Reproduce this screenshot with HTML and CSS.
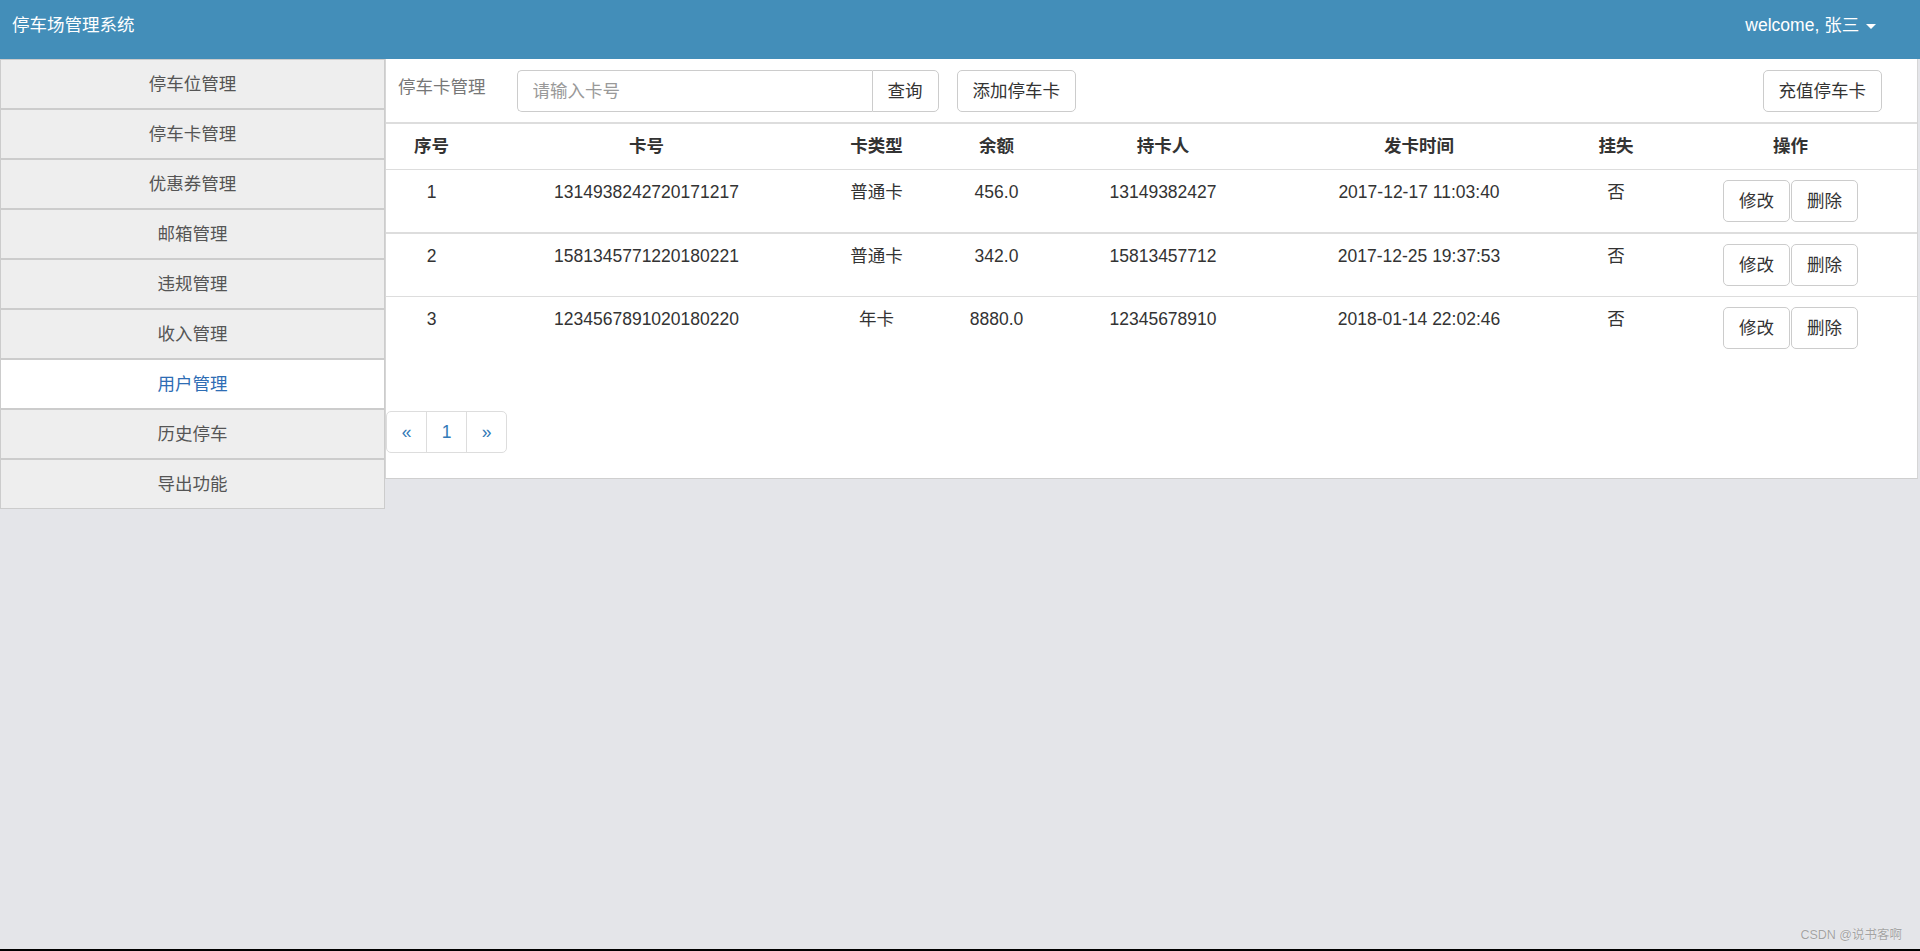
FILE: index.html
```html
<!DOCTYPE html>
<html lang="zh-CN">
<head>
<meta charset="utf-8">
<title>停车场管理系统</title>
<link rel="stylesheet" href="styles.css">
</head>
<body>
<header class="navbar">
  <div class="brand">停车场管理系统</div>
  <div class="user">welcome, 张三 <span class="caret"></span></div>
</header>
<div class="layout">
  <nav class="sidebar">
    <a class="side-item">停车位管理</a>
    <a class="side-item">停车卡管理</a>
    <a class="side-item">优惠券管理</a>
    <a class="side-item">邮箱管理</a>
    <a class="side-item">违规管理</a>
    <a class="side-item">收入管理</a>
    <a class="side-item active">用户管理</a>
    <a class="side-item">历史停车</a>
    <a class="side-item">导出功能</a>
  </nav>
  <main class="content">
    <section class="panel">
      <div class="toolbar">
        <span class="toolbar-title">停车卡管理</span>
        <div class="input-group">
          <input class="form-input" type="text" placeholder="请输入卡号">
          <button class="btn btn-attached">查询</button>
        </div>
        <button class="btn btn-add">添加停车卡</button>
        <button class="btn btn-right">充值停车卡</button>
      </div>
      <table class="data-table">
        <colgroup>
          <col class="c1"><col class="c2"><col class="c3"><col class="c4">
          <col class="c5"><col class="c6"><col class="c7"><col class="c8">
        </colgroup>
        <thead>
          <tr><th>序号</th><th>卡号</th><th>卡类型</th><th>余额</th><th>持卡人</th><th>发卡时间</th><th>挂失</th><th>操作</th></tr>
        </thead>
        <tbody>
          <tr class="row-first">
            <td>1</td><td>1314938242720171217</td><td>普通卡</td><td>456.0</td><td>13149382427</td><td>2017-12-17 11:03:40</td><td>否</td>
            <td><div class="ops"><button class="btn">修改</button><button class="btn">删除</button></div></td>
          </tr>
          <tr>
            <td>2</td><td>1581345771220180221</td><td>普通卡</td><td>342.0</td><td>15813457712</td><td>2017-12-25 19:37:53</td><td>否</td>
            <td><div class="ops"><button class="btn">修改</button><button class="btn">删除</button></div></td>
          </tr>
          <tr class="row-last">
            <td>3</td><td>1234567891020180220</td><td>年卡</td><td>8880.0</td><td>12345678910</td><td>2018-01-14 22:02:46</td><td>否</td>
            <td><div class="ops"><button class="btn">修改</button><button class="btn">删除</button></div></td>
          </tr>
        </tbody>
      </table>
      <ul class="pagination">
        <li><a>&laquo;</a></li>
        <li><a>1</a></li>
        <li><a>&raquo;</a></li>
      </ul>
    </section>
  </main>
  <div class="watermark">CSDN @说书客啊</div>
</div>
<div class="screen-edge"></div>
</body>
</html>
```
FILE: styles.css
```css
* { box-sizing: border-box; }

html, body {
  margin: 0;
  padding: 0;
  height: 100%;
}

body {
  display: flex;
  flex-direction: column;
  background: #e4e5e9;
  font-family: "Liberation Sans", "Noto Sans CJK SC", sans-serif;
  font-size: 17.5px;
  line-height: 25px;
  color: #333;
}

.navbar {
  flex: 0 0 59px;
  height: 59px;
  background: #438eb9;
  display: flex;
  justify-content: space-between;
  align-items: flex-start;
  padding: 13px 44px 0 12px;
  color: #fff;
}

.brand {
  font-size: 17.5px;
  line-height: 25px;
}

.user {
  font-size: 17.5px;
  line-height: 25px;
}

.caret {
  display: inline-block;
  width: 0;
  height: 0;
  margin-left: 2px;
  vertical-align: middle;
  border-top: 5px solid #fff;
  border-left: 5px solid transparent;
  border-right: 5px solid transparent;
}

.layout {
  flex: 1;
  display: flex;
  align-items: flex-start;
  position: relative;
}

.sidebar {
  flex: 0 0 385px;
  width: 385px;
  display: flex;
  flex-direction: column;
}

.side-item {
  display: block;
  height: 50px;
  line-height: 48px;
  text-align: center;
  background: #eeeeee;
  border: 1px solid #cccccc;
  color: #555;
  font-size: 17.5px;
}

.side-item.active {
  background: #fff;
  color: #2e6db4;
}

.content {
  flex: 0 0 1533px;
  width: 1533px;
}

.panel {
  background: #fff;
  border-left: 1px solid #d6d6d6;
  border-right: 1px solid #d6d6d6;
  border-bottom: 1px solid #cfcfcf;
}

.toolbar {
  display: flex;
  align-items: flex-start;
  padding: 11px 35px 10px 12px;
  border-bottom: 2px solid #dddddd;
}

.toolbar-title {
  color: #777;
  margin-top: 5px;
  line-height: 25px;
}

.input-group {
  display: flex;
  margin-left: 31px;
}

.form-input {
  width: 355px;
  height: 42px;
  padding: 7px 15px;
  border: 1px solid #cccccc;
  border-right: none;
  border-radius: 5px 0 0 5px;
  font-family: inherit;
  font-size: 17.5px;
  color: #555;
  outline: none;
}

.form-input::placeholder {
  color: #999;
}

.btn {
  height: 42px;
  padding: 7px 15px;
  border: 1px solid #cccccc;
  border-radius: 5px;
  background: #fff;
  color: #333;
  font-family: inherit;
  font-size: 17.5px;
  line-height: 25px;
  cursor: pointer;
}

.btn-attached {
  border-radius: 0 5px 5px 0;
  width: 67px;
}

.btn-add {
  margin-left: 18px;
}

.btn-right {
  margin-left: auto;
}

.data-table {
  width: 1531px;
  border-collapse: collapse;
  table-layout: fixed;
  margin: 0;
}

.c1 { width: 91px; }
.c2 { width: 339px; }
.c3 { width: 121px; }
.c4 { width: 119px; }
.c5 { width: 214px; }
.c6 { width: 298px; }
.c7 { width: 96px; }
.c8 { width: 253px; }

.data-table th {
  padding: 10px 8px;
  text-align: center;
  font-weight: bold;
  line-height: 25px;
  border-bottom: 1px solid #dddddd;
}

.data-table td {
  padding: 10px 8px;
  text-align: center;
  vertical-align: top;
  line-height: 25px;
  border-bottom: 1px solid #dddddd;
}

.data-table tr.row-first td {
  border-bottom: 2px solid #dddddd;
}

.data-table tr.row-last td {
  border-bottom: none;
}

.ops {
  display: flex;
  justify-content: center;
  gap: 1px;
}

.ops .btn {
  width: 67px;
  padding: 7px 0;
}

.pagination {
  list-style: none;
  margin: 52px 0 25px;
  padding: 0;
  display: flex;
}

.pagination li a {
  display: block;
  width: 41px;
  height: 42px;
  padding: 7px 0;
  text-align: center;
  border: 1px solid #dddddd;
  margin-left: -1px;
  color: #337ab7;
  line-height: 26px;
}

.pagination li:first-child a {
  margin-left: 0;
  border-radius: 5px 0 0 5px;
}

.pagination li:last-child a {
  border-radius: 0 5px 5px 0;
}

.watermark {
  position: absolute;
  right: 18px;
  bottom: 6px;
  font-size: 12.5px;
  line-height: 16px;
  color: #a3a3a3;
  text-shadow: 0 0 1px #fff;
}

.screen-edge {
  flex: 0 0 2px;
  height: 2px;
  background: #000;
}
```
